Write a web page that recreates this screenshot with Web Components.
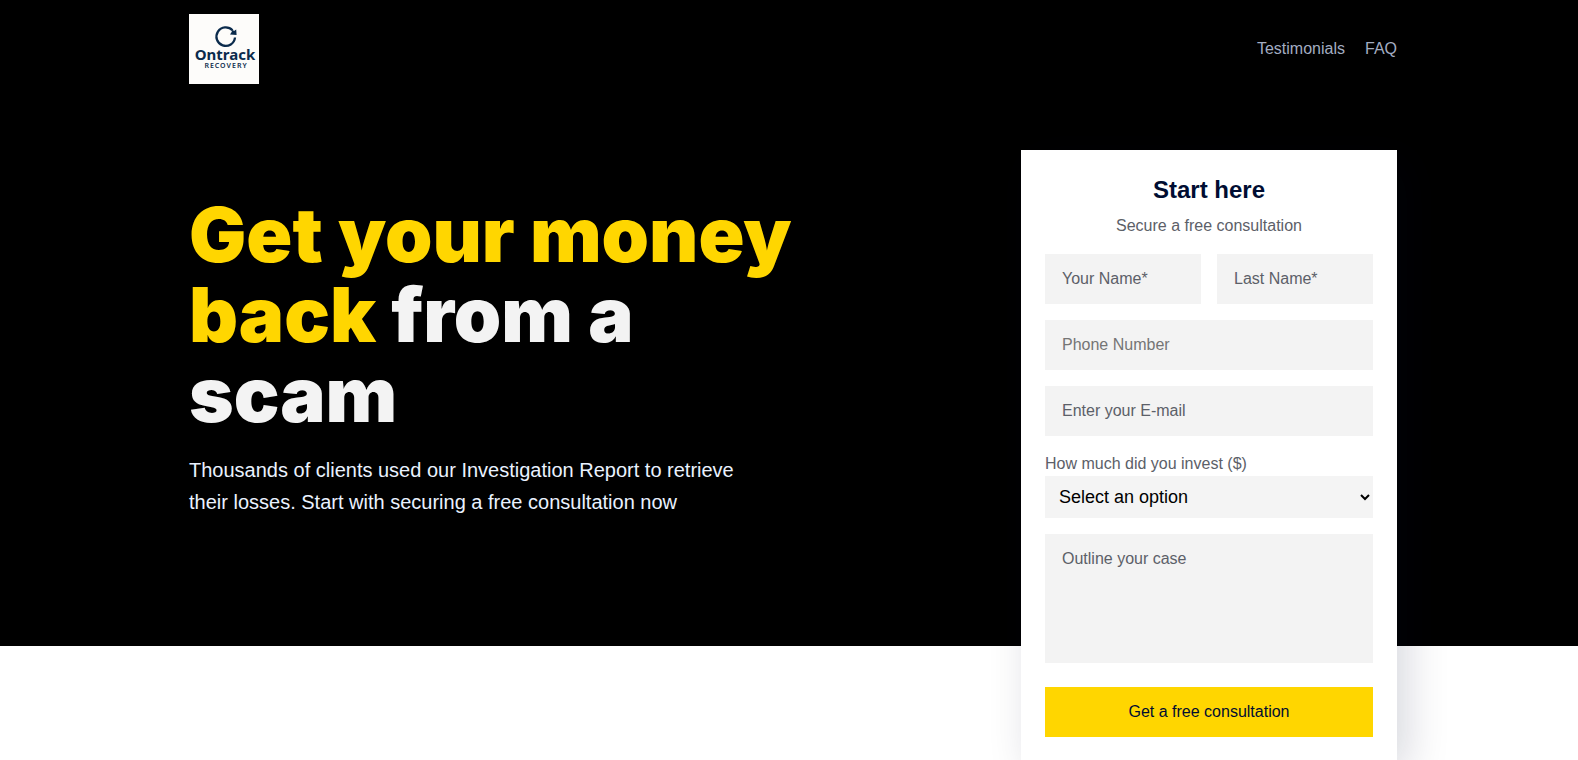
<!DOCTYPE html>
<html lang="en">
<head>
<meta charset="utf-8">
<meta name="viewport" content="width=device-width, initial-scale=1">
<title>Ontrack Recovery</title>
<style>
  body {
    margin: 0;
    overflow-x: hidden;
    background: #fff;
    color: #5c6068;
    font: 16px/24px "Liberation Sans", Arial, sans-serif;
    --gold: #ffd600;
    --navy: #000d32;
    --field: #f3f3f3;
    --page-width: 1208px;
  }
</style>
</head>
<body>
<landing-page></landing-page>

<template id="site-logo">
  <style>
    :host { display: block; width: 70px; height: 70px; background: #fdfcfa; }
    a { display: block; height: 100%; }
    svg { display: block; width: 100%; height: 100%; }
    text { fill: #0b2b4c; text-anchor: middle; font-family: "Noto Sans", sans-serif; font-weight: 700; }
    .name { font-size: 15px; }
    .sub { font-size: 7px; font-weight: 600; letter-spacing: 1px; }
  </style>
  <a href="#" aria-label="Ontrack Recovery home">
    <svg viewBox="0 0 70 70">
      <path d="M43.500 16.200 A9.300 9.300 0 1 0 46 23.500" fill="none" stroke="#0b2b4c" stroke-width="2.300"/>
      <path d="M41 20.600 L47.600 20.900 L47.200 15.500 L45 17 L43.500 15.500 L42.500 18.200 Z" fill="#0b2b4c"/>
      <text class="name" x="36" y="46">Ontrack</text>
      <text class="sub" x="37" y="54">RECOVERY</text>
    </svg>
  </a>
</template>

<template id="site-header">
  <style>
    :host { display: flex; align-items: center; justify-content: space-between; padding: 14px 0; }
    nav { display: flex; gap: 20px; }
    ::slotted(a) { color: #a3adc2; text-decoration: none; }
  </style>
  <site-logo></site-logo>
  <nav><slot></slot></nav>
</template>

<template id="hero-copy">
  <style>
    :host { display: block; }
    h1 { margin: 0 0 20px; color: #f3f3f3; font: 900 76px/80px Inter, "Arial Black", sans-serif; }
    em { color: var(--gold); font-style: normal; }
    p { margin: 0; max-width: 560px; color: #eaf2ff; font-size: 20px; line-height: 32px; }
  </style>
  <h1><em><slot name="highlight"></slot></em> <slot name="title"></slot></h1>
  <p><slot></slot></p>
</template>

<template id="form-field">
  <style>
    :host { display: block; min-width: 0; }
    input, textarea {
      display: block; box-sizing: border-box; width: 100%; height: 50px; margin: 0;
      padding: 12px 16px; border: 1px solid var(--field); border-radius: 0;
      background: var(--field); color: var(--navy); font: inherit;
    }
    textarea { height: 129px; resize: none; }
    ::placeholder { color: var(--hint, #5c6068); opacity: 1; }
  </style>
</template>

<template id="consultation-form">
  <style>
    :host {
      display: block; padding: 24px; background: #fff;
      box-shadow: 10px 10px 40px rgba(0, 13, 50, .16);
    }
    h2 { margin: 0 0 8px; color: var(--navy); font-size: 24px; line-height: 32px; text-align: center; }
    p { margin: 0 0 16px; text-align: center; }
    form { display: grid; grid-template-columns: 1fr 1fr; gap: 16px; }
    .wide { grid-column: 1 / -1; }
    .phone { --hint: #757575; }
    label, select { display: block; }
    select {
      width: 100%; height: 42px; padding: 0 10px; border: 0; border-radius: 0;
      background: #f4f4f4; color: #000; font: 18px "Liberation Sans", Arial, sans-serif;
    }
    button {
      height: 50px; margin-top: 8px; padding: 0; border: 0;
      background: var(--gold); color: var(--navy); font: inherit; cursor: pointer;
    }
  </style>
  <h2>Start here</h2>
  <p>Secure a free consultation</p>
  <form>
    <form-field hint="Your Name*"></form-field>
    <form-field hint="Last Name*"></form-field>
    <form-field class="wide phone" type="tel" hint="Phone Number"></form-field>
    <form-field class="wide" type="email" hint="Enter your E-mail"></form-field>
    <div class="wide">
      <label for="amount">How much did you invest ($)</label>
      <select id="amount"><option>Select an option</option></select>
    </div>
    <form-field class="wide" multiline hint="Outline your case"></form-field>
    <button class="wide">Get a free consultation</button>
  </form>
</template>

<template id="landing-page">
  <style>
    :host { display: block; }
    .hero { background: #000; }
    .inner { max-width: var(--page-width); margin: 0 auto; padding-left: 8px; }
    main { display: grid; grid-template-columns: minmax(0, 640px) 376px; justify-content: space-between; padding-top: 52px; }
    hero-copy { padding-top: 44px; }
    /* the card hangs over the lower edge of the dark band */
    consultation-form { margin-bottom: -115px; }
    .below { height: 115px; }
    @media (max-width: 1240px) {
      .inner { padding: 0 24px; }
      main { grid-template-columns: minmax(0, 1fr) 376px; gap: 24px; }
    }
    @media (max-width: 900px) {
      main { grid-template-columns: minmax(0, 1fr); }
    }
  </style>
  <div class="hero">
    <div class="inner">
      <site-header>
        <a href="#testimonials">Testimonials</a>
        <a href="#faq">FAQ</a>
      </site-header>
      <main>
        <hero-copy>
          <span slot="highlight">Get your money back</span>
          <span slot="title">from a scam</span>
          Thousands of clients used our Investigation Report to retrieve their losses. Start with securing a free consultation now
        </hero-copy>
        <consultation-form></consultation-form>
      </main>
    </div>
  </div>
  <div class="below"></div>
</template>

<script>
  class TemplateElement extends HTMLElement {
    constructor() {
      super();
      const template = document.getElementById(this.localName);
      this.attachShadow({ mode: "open" }).append(template.content.cloneNode(true));
    }
  }

  class FormField extends TemplateElement {
    connectedCallback() {
      if (this.control) return;
      const multiline = this.hasAttribute("multiline");
      this.control = document.createElement(multiline ? "textarea" : "input");
      if (!multiline) this.control.type = this.getAttribute("type") || "text";
      this.control.placeholder = this.getAttribute("hint");
      this.control.setAttribute("aria-label", this.getAttribute("hint"));
      this.shadowRoot.append(this.control);
    }
  }

  customElements.define("form-field", FormField);
  for (const name of ["site-logo", "site-header", "hero-copy", "consultation-form", "landing-page"]) {
    customElements.define(name, class extends TemplateElement {});
  }
</script>
</body>
</html>
